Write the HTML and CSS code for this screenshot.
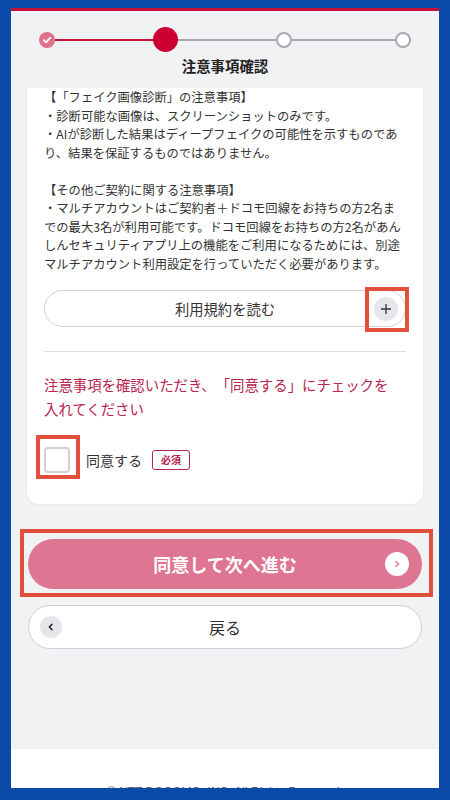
FILE: index.html
```html
<!DOCTYPE html>
<html lang="ja">
<head>
    <meta charset="UTF-8">
    <title>注意事項確認</title>
    <link rel="stylesheet" href="styles.css">
</head>
<body>
<div class="screen">
    <div class="head">
        <div class="steps">
            <span class="dot done">
                <svg width="10" height="10" viewBox="0 0 10 10"><path d="M1.8 5.2l2.2 2.1 4.3-4.6" fill="none" stroke="#fff" stroke-width="1.8" stroke-linecap="round" stroke-linejoin="round"/></svg>
            </span>
            <span class="bar on"></span>
            <span class="dot cur"></span>
            <span class="bar"></span>
            <span class="dot"></span>
            <span class="bar"></span>
            <span class="dot"></span>
        </div>
        <h1 class="ttl">注意事項確認</h1>
    </div>

    <div class="main">
        <div class="card">
            <p class="note">【「フェイク画像診断」の注意事項】<br>・診断可能な画像は、スクリーンショットのみです。<br>・AIが診断した結果はディープフェイクの可能性を示すものであ<br>り、結果を保証するものではありません。</p>
            <p class="note gap">【その他ご契約に関する注意事項】<br>・マルチアカウントはご契約者＋ドコモ回線をお持ちの方2名ま<br>での最大3名が利用可能です。ドコモ回線をお持ちの方2名があん<br>しんセキュリティアプリ上の機能をご利用になるためには、別途<br>マルチアカウント利用設定を行っていただく必要があります。</p>

            <div class="btn-terms">
                利用規約を読む
                <span class="plus">
                    <svg width="12" height="12" viewBox="0 0 12 12"><path d="M6 1v10M1 6h10" stroke="#333" stroke-width="1.3"/></svg>
                </span>
                <span class="mark mark-plus"></span>
            </div>

            <hr class="line">

            <p class="warn">注意事項を確認いただき、「同意する」にチェックを<br>入れてください</p>

            <div class="check-row">
                <span class="box"></span>
                <span class="lbl">同意する</span>
                <span class="req">必須</span>
                <span class="mark mark-check"></span>
            </div>
        </div>

        <div class="next-wrap">
            <div class="btn-next">
                同意して次へ進む
                <span class="arr">
                    <svg width="10" height="10" viewBox="0 0 10 10"><path d="M4 2.5l2.6 2.5L4 7.5" fill="none" stroke="#de7592" stroke-width="1.4" stroke-linecap="round" stroke-linejoin="round"/></svg>
                </span>
            </div>
        </div>

        <div class="btn-back">
            <span class="arr-l">
                <svg width="10" height="10" viewBox="0 0 10 10"><path d="M6 2.2L3.4 5 6 7.8" fill="none" stroke="#222" stroke-width="1.5" stroke-linecap="round" stroke-linejoin="round"/></svg>
            </span>
            戻る
        </div>
    </div>

    <div class="foot">© NTT DOCOMO, INC. All Rights Reserved.</div>
</div>
</body>
</html>
```

FILE: styles.css
```css
* {margin:0; padding:0; box-sizing:border-box;}

body {background:#0b4aa9; font-family:"Noto Sans CJK JP", "Noto Sans", sans-serif; color:#333; text-spacing-trim:space-all;}

.screen {margin:8px 11px 0; height:780px; border-top:3px solid #c8103a; background:#f1f2f4; overflow:hidden;}

/* stepper */
.head {padding:16px 0 12px;}
.steps {display:flex; align-items:center; height:25px; padding:0 28px;}
.dot {width:16px; height:16px; border-radius:50%; border:2px solid #a9a9ad; background:#fff; flex:none; position:relative;}
.dot.done {background:#e0708c; border:none; display:flex; align-items:center; justify-content:center;}
.dot.cur {width:25px; height:25px; margin:0 -4.5px; background:#cc0033; border:none;}
.bar {flex:1; height:2px; background:#a9a9ad;}
.bar.on {background:#c8103a;}
.ttl {margin-top:4px; text-align:center; font-size:14.4px; line-height:20px; font-weight:700; color:#222;}

/* card */
.main {padding:0 17px 100px;}
.card {margin:0 -1px; background:#fff; border-radius:0 0 12px 12px; padding:0 17px 31px; box-shadow:0 1px 3px rgba(0,0,0,.05);}
.note {font-size:12.3px; line-height:18.5px; white-space:nowrap; color:#333;}
.note.gap {margin-top:18.5px;}

.btn-terms {position:relative; margin-top:17px; height:37px; border:1px solid #cfd0d4; border-radius:19px; text-align:center; font-size:14.3px; line-height:35px; color:#333;}
.plus {position:absolute; right:7px; top:50%; margin-top:-12px; width:24px; height:24px; border-radius:50%; background:#e5e6ea; display:flex; align-items:center; justify-content:center;}

.line {margin-top:24px; border:none; border-top:1px solid #dcdde0;}

.warn {margin-top:21px; font-size:14.4px; line-height:24px; color:#b8234f; white-space:nowrap;}

.check-row {position:relative; margin-top:26px; display:flex; align-items:center; height:26px;}
.box {width:26px; height:26px; border:2px solid #cfd0d3; border-radius:4px; background:#fff;}
.lbl {margin-left:16px; font-size:14px; color:#333;}
.req {margin-left:10px; padding:0 8px; height:20px; border:1px solid #b8234f; border-radius:3px; font-size:10px; line-height:18px; font-weight:700; color:#b8234f;}

/* red marks laid over the screenshot */
.mark {position:absolute; border:4px solid #e2503c; pointer-events:none;}
.mark-plus {right:-4px; top:-4px; width:44px; height:45px;}
.mark-check {left:-8px; top:-12px; width:44px; height:44px;}

/* buttons */
.next-wrap {margin:25px -11px 0 -8px; border:4px solid #e2503c; padding:6px 7px 4px 4px;}
.btn-next {position:relative; height:50px; border-radius:25px; background:#de7592; color:#fff; text-align:center; font-size:18px; font-weight:700; line-height:50px;}
.arr {position:absolute; right:13px; top:13px; width:24px; height:24px; border-radius:50%; background:#fff; display:flex; align-items:center; justify-content:center;}

.btn-back {position:relative; margin-top:8px; height:44px; border:1px solid #cfd0d4; border-radius:22px; background:#fff; text-align:center; font-size:16px; line-height:42px; color:#333;}
.arr-l {position:absolute; left:11px; top:10px; width:22px; height:22px; border-radius:50%; background:#e5e6ea; display:flex; align-items:center; justify-content:center;}

.foot {background:#fff; padding-top:36px; height:60px; text-align:center; font-family:"Liberation Sans", Arial, sans-serif; font-size:12px; color:#666;}
```
